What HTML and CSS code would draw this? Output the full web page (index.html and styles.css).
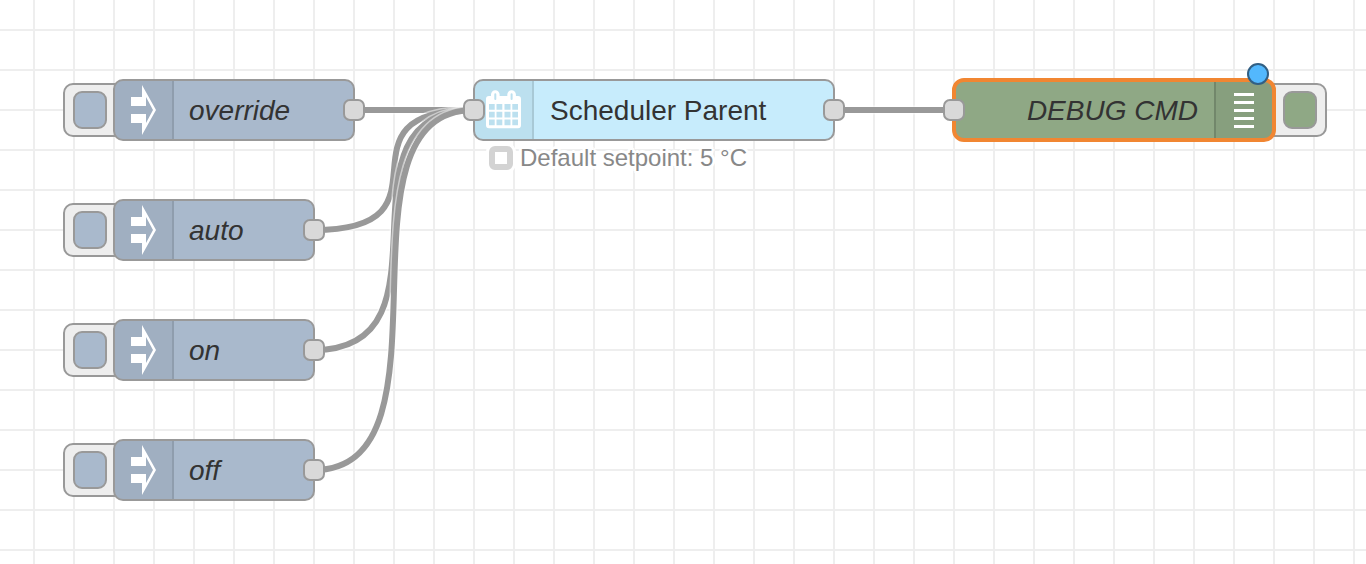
FILE: index.html
```
<!DOCTYPE html>
<html lang="en">
<head>
<meta charset="utf-8">
<title>Flow editor</title>
<link rel="stylesheet" href="styles.css">
</head>
<body>
<main class="canvas">
  <svg class="wires" aria-hidden="true">
    <g><path class="wire-outline" d="M354 110H474"/><path class="wire" d="M354 110H474"/></g>
    <g><path class="wire-outline" d="M314 230C464 230 324 110 474 110"/><path class="wire" d="M314 230C464 230 324 110 474 110"/></g>
    <g><path class="wire-outline" d="M314 350C464 350 324 110 474 110"/><path class="wire" d="M314 350C464 350 324 110 474 110"/></g>
    <g><path class="wire-outline" d="M314 470C464 470 324 110 474 110"/><path class="wire" d="M314 470C464 470 324 110 474 110"/></g>
    <g><path class="wire-outline" d="M834 110H954"/><path class="wire" d="M834 110H954"/></g>
  </svg>

  <section class="node inject override">
    <button class="trigger" aria-label="Inject override"><span class="trigger-face"></span></button>
    <div class="body"><span class="icon"><svg class="glyph" viewBox="0 0 58 58"><path fill="#fff" d="M16 16H27V4L41 29L27 54V42H16V33H31V42L38 29L31 16V25H16Z"/></svg></span><span class="label">override</span></div>
    <span class="port out"></span>
  </section>
  <section class="node inject auto">
    <button class="trigger" aria-label="Inject auto"><span class="trigger-face"></span></button>
    <div class="body"><span class="icon"><svg class="glyph" viewBox="0 0 58 58"><path fill="#fff" d="M16 16H27V4L41 29L27 54V42H16V33H31V42L38 29L31 16V25H16Z"/></svg></span><span class="label">auto</span></div>
    <span class="port out"></span>
  </section>
  <section class="node inject on">
    <button class="trigger" aria-label="Inject on"><span class="trigger-face"></span></button>
    <div class="body"><span class="icon"><svg class="glyph" viewBox="0 0 58 58"><path fill="#fff" d="M16 16H27V4L41 29L27 54V42H16V33H31V42L38 29L31 16V25H16Z"/></svg></span><span class="label">on</span></div>
    <span class="port out"></span>
  </section>
  <section class="node inject off">
    <button class="trigger" aria-label="Inject off"><span class="trigger-face"></span></button>
    <div class="body"><span class="icon"><svg class="glyph" viewBox="0 0 58 58"><path fill="#fff" d="M16 16H27V4L41 29L27 54V42H16V33H31V42L38 29L31 16V25H16Z"/></svg></span><span class="label">off</span></div>
    <span class="port out"></span>
  </section>

  <section class="node scheduler">
    <div class="body"><span class="icon"><svg class="glyph" viewBox="0 0 58 58"><path fill="#fff" fill-rule="evenodd" d="M14 15H16V13.500a4.300 4.300 0 0 1 8.600 0V15H32.300V13.500a4.300 4.300 0 0 1 8.600 0V15H43a3 3 0 0 1 3 3V44.300a3 3 0 0 1-3 3H14a3 3 0 0 1-3-3V18a3 3 0 0 1 3-3ZM19.300 13.300V18a1 1 0 0 0 2 0V13.300a1 1 0 0 0-2 0ZM35.600 13.300V18a1 1 0 0 0 2 0V13.300a1 1 0 0 0-2 0ZM14 23V28.700H19.700V23ZM21.500 23V28.700H27.300V23ZM29.500 23V28.700H35.500V23ZM37.300 23V28.700H43V23ZM14 30.700V36.400H19.700V30.700ZM21.500 30.700V36.400H27.300V30.700ZM29.500 30.700V36.400H35.500V30.700ZM37.300 30.700V36.400H43V30.700ZM14 38.600V44.300H19.700V38.600ZM21.500 38.600V44.300H27.300V38.600ZM29.500 38.600V44.300H35.500V38.600ZM37.300 38.600V44.300H43V38.600Z"/></svg></span><span class="label">Scheduler Parent</span></div>
    <span class="port in"></span><span class="port out"></span>
    <div class="status"><span class="status-mark"></span><span class="status-text">Default setpoint: 5 °C</span></div>
  </section>

  <section class="node debug">
    <div class="body"><span class="label">DEBUG CMD</span><span class="icon"><svg class="glyph" viewBox="0 0 56 56"><path stroke="#fff" stroke-width="3" d="M18 12.500H38M18 20.500H38M18 28.500H38M18 36.500H38M18 44.500H38"/></svg></span></div>
    <button class="trigger" aria-label="Toggle debug output"><span class="trigger-face"></span></button>
    <span class="port in"></span>
    <span class="changed"></span>
  </section>
</main>
</body>
</html>
```
FILE: styles.css
```
* { box-sizing: border-box; }
body { margin: 0; font-family: "Helvetica Neue", "Liberation Sans", Arial, sans-serif; }
.canvas {
  position: relative;
  min-height: 100vh;
  overflow: hidden;
  background-color: #fff;
  background-image: linear-gradient(#eee 2px, transparent 2px), linear-gradient(90deg, #eee 2px, transparent 2px);
  background-size: 40px 40px;
  background-position: 33px 29px;
}
.wires { position: absolute; inset: 0; width: 100%; height: 100%; fill: none; }
.wire { stroke: #999; stroke-width: 6px; }
.wire-outline { stroke: #fff; stroke-width: 9px; opacity: 0.5; }

.node { position: absolute; display: flex; align-items: center; }
.override { left: 63px; top: 79px; width: 292px; }
.auto { left: 63px; top: 199px; width: 252px; }
.on { left: 63px; top: 319px; width: 252px; }
.off { left: 63px; top: 439px; width: 252px; }
.scheduler { left: 473px; top: 79px; width: 362px; }
.debug { left: 952px; top: 78px; width: 375px; }

.body {
  position: relative;
  z-index: 1;
  display: flex;
  flex: 1;
  align-items: center;
  height: 62px;
  overflow: hidden;
  border: 2px solid #999;
  border-radius: 10px;
}
.inject .body, .inject .trigger-face { background: #a9b9cc; }
.scheduler .body { background: #c7ecfc; }
.debug .body, .debug .trigger-face { background: #8fa885; }
.debug .body { height: 64px; border: 4px solid #f18632; border-radius: 12px; }

.icon {
  flex: none;
  width: 59px;
  height: 58px;
  background: rgba(0, 0, 0, 0.05);
  border-right: 2px solid rgba(0, 0, 0, 0.1);
}
.glyph { display: block; width: 58px; height: 58px; }
.debug .icon {
  width: 58px;
  height: 56px;
  border-right: 0;
  border-left: 2px solid rgba(0, 0, 0, 0.15);
}
.debug .glyph { width: 56px; height: 56px; }
.label { padding: 2px 16px 0; font-size: 28px; line-height: 32px; color: #333; white-space: nowrap; }
.inject .label { padding-left: 15px; }
.inject .label, .debug .label { font-style: italic; }
.debug .label { flex: 1; text-align: right; }

.trigger {
  display: flex;
  align-items: center;
  flex: none;
  width: 64px;
  height: 54px;
  margin: 0 -14px 0 0;
  padding: 0 8px;
  background: #eee;
  border: 2px solid #999;
  border-radius: 10px;
}
.trigger-face { width: 34px; height: 38px; border: 2px solid #999; border-radius: 9px; }
.debug .trigger { justify-content: flex-end; margin: 0 0 0 -13px; }

.port {
  position: absolute;
  z-index: 2;
  top: 20px;
  width: 22px;
  height: 22px;
  background: #d9d9d9;
  border: 2px solid #999;
  border-radius: 7px;
}
.out { right: -10px; }
.in { left: -10px; }
.debug .port { top: 21px; left: -9px; }
.changed {
  position: absolute;
  z-index: 3;
  top: -15px;
  right: 58px;
  width: 22px;
  height: 22px;
  background: #53b8fd;
  border: 2px solid #315f84;
  border-radius: 50%;
}
.status { position: absolute; top: 65px; left: 16px; display: flex; align-items: center; gap: 7px; }
.status-mark {
  width: 24px;
  height: 24px;
  background: #fff;
  border: 6px solid #d3d3d3;
  border-radius: 6px;
  box-shadow: 0 0 0 3px #fff;
}
.status-text {
  font-size: 24px;
  line-height: 28px;
  color: #888;
  white-space: nowrap;
  text-shadow: 3px 0 #fff, -3px 0 #fff, 0 3px #fff, 0 -3px #fff, 2px 2px #fff, -2px 2px #fff, 2px -2px #fff, -2px -2px #fff;
}
```
